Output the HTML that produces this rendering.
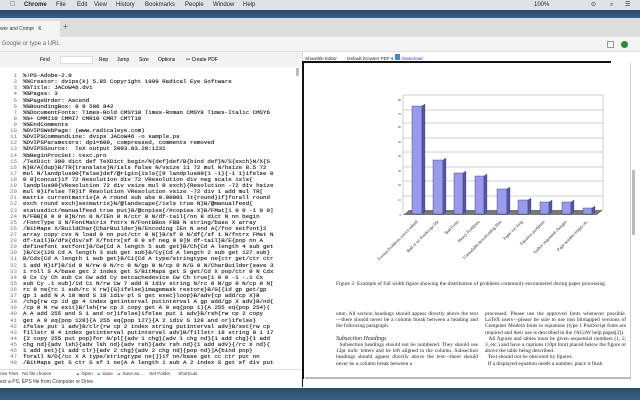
<!DOCTYPE html><html><head><meta charset="utf-8"><style>
*{margin:0;padding:0;box-sizing:border-box}
body{width:640px;height:400px;overflow:hidden;background:#fff;font-family:"Liberation Sans",sans-serif;position:relative}
.a{position:absolute}
.menu{top:0;left:0;width:640px;height:10px;background:#dfe3e8;font-size:6px;line-height:10px;color:#222}
.menu span{position:absolute;top:0}
.blue{left:0;width:640px;background:linear-gradient(#2c4a6b,#3a5f86)}
.code{left:0;top:67px;width:296px;font-family:"Liberation Mono",monospace;font-size:5.8px;line-height:6.12px;color:#111;white-space:pre;-webkit-text-stroke:0.12px #111}
.code div{height:6.12px}
.code b{display:inline-block;width:17px;text-align:right;color:#777;font-weight:normal;margin-right:6px;-webkit-text-stroke:0}
.ptxt{font-family:"Liberation Serif",serif;font-size:5.4px;line-height:6.2px;color:#222;text-align:justify}
</style></head><body>
<div class="a menu"><span style="left:10px;font-size:7px">&#63743;</span><span style="left:24px;font-weight:bold">Chrome</span><span style="left:56px">File</span><span style="left:77px">Edit</span><span style="left:94px">View</span><span style="left:116px">History</span><span style="left:145px">Bookmarks</span><span style="left:185px">People</span><span style="left:213px">Window</span><span style="left:243px">Help</span><span style="left:534px">100%</span><span style="left:591px">⊙</span><span style="left:610px">⌕</span><span style="left:625px">☰</span></div>
<div class="a blue" style="top:10px;height:8px"></div>
<div class="a" style="top:18px;left:0;width:640px;height:19px;background:#dedede"></div>
<div class="a" style="top:21px;left:0;width:60px;height:16px;background:#f4f4f4;font-size:5px;line-height:16px;color:#333">wer and Compr &nbsp;&nbsp;K</div>
<div class="a" style="top:22px;left:63px;font-size:8px;color:#555">+</div>
<div class="a" style="top:37px;left:0;width:640px;height:15px;background:#f4f4f4;border-bottom:1px solid #ddd;font-size:6px;line-height:15px;color:#666">&nbsp;Google or type a URL</div>
<div class="a" style="top:41px;left:607px;width:7px;height:7px;border:1px solid #999"></div>
<div class="a" style="top:41px;left:621px;width:7px;height:7px;border-radius:50%;background:#2a8a2a"></div>
<div class="a" style="top:52px;left:0;width:302px;height:15px;background:#f2f2f2"></div>
<div class="a" style="top:57px;left:40px;font-size:5px">Find</div>
<div class="a" style="top:56px;left:60px;width:33px;height:8px;background:#fff;border:1px solid #ddd"></div>
<div class="a" style="top:57px;left:99px;font-size:5px">Rep</div>
<div class="a" style="top:57px;left:117px;font-size:5px">Jump</div>
<div class="a" style="top:57px;left:139px;font-size:5px">Size</div>
<div class="a" style="top:57px;left:158px;font-size:5px">Options</div>
<div class="a" style="top:57px;left:186px;font-size:5px">✂ Create PDF</div>
<div class="a" style="top:68px;left:296px;width:3px;height:8px;background:#bbb"></div>
<div class="a code">
<div><b>1</b>%!PS-Adobe-2.0</div><div><b>2</b>%%Creator: dvips(k) 5.85 Copyright 1999 Radical Eye Software</div><div><b>3</b>%%Title: JACoW46.dvi</div><div><b>4</b>%%Pages: 3</div><div><b>5</b>%%PageOrder: Ascend</div><div><b>6</b>%%BoundingBox: 0 0 596 842</div><div><b>7</b>%%DocumentFonts: Times-Bold CMSY10 Times-Roman CMSY8 Times-Italic CMSY6</div><div><b>8</b>%%+ CMMI10 CMMI7 CMR10 CMR7 CMTT10</div><div><b>9</b>%%EndComments</div><div><b>10</b>%DVIPSWebPage: (www.radicaleye.com)</div><div><b>11</b>%DVIPSCommandLine: dvips JACoW46 -o sample.ps</div><div><b>12</b>%DVIPSParameters: dpi=600, compressed, comments removed</div><div><b>13</b>%DVIPSSource:  TeX output 2003.03.20:1231</div><div><b>14</b>%%BeginProcSet: texc.pro</div><div><b>15</b>/TeXDict 300 dict def TeXDict begin/N{def}def/B{bind def}N/S{exch}N/X{S</div><div><b>16</b>N}B/A{dup}B/TR{translate}N/isls false N/vsize 11 72 mul N/hsize 8.5 72</div><div><b>17</b>mul N/landplus90{false}def/@rigin{isls{[0 landplus90{1 -1}{-1 1}ifelse 0</div><div><b>18</b>0 0]concat}if 72 Resolution div 72 VResolution div neg scale isls{</div><div><b>19</b>landplus90{VResolution 72 div vsize mul 0 exch}{Resolution -72 div hsize</div><div><b>20</b>mul 0}ifelse TR}if Resolution VResolution vsize -72 div 1 add mul TR[</div><div><b>21</b>matrix currentmatrix{A A round sub abs 0.00001 lt{round}if}forall round</div><div><b>22</b>exch round exch]setmatrix}N/@landscape{/isls true N}B/@manualfeed{</div><div><b>23</b>statusdict/manualfeed true put}B/@copies{/#copies X}B/FMat[1 0 0 -1 0 0]</div><div><b>24</b>N/FBB[0 0 0 0]N/nn 0 N/IEn 0 N/ctr 0 N/df-tail{/nn 8 dict N nn begin</div><div><b>25</b>/FontType 3 N/FontMatrix fntrx N/FontBBox FBB N string/base X array</div><div><b>26</b>/BitMaps X/BuildChar{CharBuilder}N/Encoding IEn N end A{/foo setfont}2</div><div><b>27</b>array copy cvx N load 0 nn put/ctr 0 N[}B/sf 0 N/df{/sf 1 N/fntrx FMat N</div><div><b>28</b>df-tail}B/dfs{div/sf X/fntrx[sf 0 0 sf neg 0 0]N df-tail}B/E{pop nn A</div><div><b>29</b>definefont setfont}B/Cw{Cd A length 5 sub get}B/Ch{Cd A length 4 sub get</div><div><b>30</b>}B/Cx{128 Cd A length 3 sub get sub}B/Cy{Cd A length 2 sub get 127 sub}</div><div><b>31</b>B/Cdx{Cd A length 1 sub get}B/Ci{Cd A type/stringtype ne{ctr get/ctr ctr</div><div><b>32</b>1 add N}if}B/id 0 N/rw 0 N/rc 0 N/gp 0 N/cp 0 N/G 0 N/CharBuilder{save 3</div><div><b>33</b>1 roll S A/base get 2 index get S/BitMaps get S get/Cd X pop/ctr 0 N Cdx</div><div><b>34</b>0 Cx Cy Ch sub Cx Cw add Cy setcachedevice Cw Ch true[1 0 0 -1 -.1 Cx</div><div><b>35</b>sub Cy .1 sub]/id Ci N/rw Cw 7 add 8 idiv string N/rc 0 N/gp 0 N/cp 0 N[</div><div><b>36</b>rc 0 ne{rc 1 sub/rc X rw}{G}ifelse}imagemask restore}B/G{{id gp get/gp</div><div><b>37</b>gp 1 add N A 18 mod S 18 idiv pl S get exec}loop}B/adv{cp add/cp X}B</div><div><b>38</b>/chg{rw cp id gp 4 index getinterval putinterval A gp add/gp X adv}B/nd{</div><div><b>39</b>/cp 0 N rw exit}B/lsh{rw cp 2 copy get A 0 eq{pop 1}{A 255 eq{pop 254}{</div><div><b>40</b>A A add 255 and S 1 and or}ifelse}ifelse put 1 adv}B/rsh{rw cp 2 copy</div><div><b>41</b>get A 0 eq{pop 128}{A 255 eq{pop 127}{A 2 idiv S 128 and or}ifelse}</div><div><b>42</b>ifelse put 1 adv}B/clr{rw cp 2 index string putinterval adv}B/set{rw cp</div><div><b>43</b>fillstr 0 4 index getinterval putinterval adv}B/fillstr 18 string 0 1 17</div><div><b>44</b>{2 copy 255 put pop}for N/pl[{adv 1 chg}{adv 1 chg nd}{1 add chg}{1 add</div><div><b>45</b>chg nd}{adv lsh}{adv lsh nd}{adv rsh}{adv rsh nd}{1 add adv}{/rc X nd}{</div><div><b>46</b>1 add set}{1 add clr}{adv 2 chg}{adv 2 chg nd}{pop nd}]A{bind pop}</div><div><b>47</b>forall N/D{/cc X A type/stringtype ne{]}if nn/base get cc ctr put nn</div><div><b>48</b>/BitMaps get S ctr S sf 1 ne{A A length 1 sub A 2 index S get sf div put</div>
</div>
<div class="a" style="top:369px;left:0;width:302px;height:8px;font-size:4.6px;line-height:8px;color:#333;border-top:1px solid #ddd;white-space:nowrap">ose Files &nbsp; No file chosen &nbsp;&nbsp;&nbsp;&nbsp;&nbsp;&nbsp;&nbsp;&nbsp;&nbsp;&nbsp;&nbsp;&nbsp;&nbsp;&nbsp;&nbsp;&nbsp;&nbsp;&nbsp;<span style="color:#2a7">▲</span> Open &nbsp;&nbsp;<span style="color:#2a7">▲</span> Save &nbsp;&nbsp;<span style="color:#2a7">▲</span> Save as... &nbsp;&nbsp;&nbsp; Set Folder &nbsp;&nbsp;&nbsp;&nbsp; Shortcuts</div>
<div class="a" style="top:379px;left:0;font-size:5px;color:#333">ect a PS, EPS file from Computer or Drive.</div>
<div class="a" style="top:52px;left:302px;width:338px;height:336px;background:#fff;border-left:1px solid #ddd"></div>
<div class="a" style="top:54px;left:305px;font-size:4.6px;color:#222;white-space:nowrap">Showtitle Editor &nbsp;&nbsp;&nbsp;&nbsp;&nbsp;&nbsp; Default browser PDF ▾ <span style="display:inline-block;width:5px;height:6px;background:#48c"></span> &nbsp;<span style="color:#33c;text-decoration:underline">Download</span></div>
<div class="a" style="top:61px;left:303px;width:308px;height:2px;background:#111"></div>
<div class="a" style="top:61px;left:302px;width:2px;height:326px;background:#111"></div>
<div class="a" style="top:63px;left:630px;width:1px;height:322px;background:#ccc"></div>
<div class="a" style="top:170px;left:632px;width:3px;height:65px;background:#bbb"></div>
<svg class="a" style="top:60px;left:290px" width="350" height="230" viewBox="290 60 350 230">
<g stroke="#888" stroke-width=".4" fill="none">
<polyline points="403,215 403,95 603,95 603,210"/>
<line x1="403" y1="110" x2="603" y2="110"/><line x1="403" y1="123" x2="603" y2="123"/><line x1="403" y1="138" x2="603" y2="138"/><line x1="403" y1="152" x2="603" y2="152"/><line x1="403" y1="167" x2="603" y2="167"/><line x1="403" y1="181" x2="603" y2="181"/><line x1="403" y1="196" x2="603" y2="196"/>
</g>
<polygon points="403,215 409,210 603,210 597,215" fill="#777"/>
<g font-family="Liberation Serif" font-size="3" fill="#333" text-anchor="end">
<text x="401" y="101">80</text><text x="401" y="115">70</text><text x="401" y="128">60</text><text x="401" y="143">50</text><text x="401" y="157">40</text><text x="401" y="172">30</text><text x="401" y="186">20</text><text x="401" y="201">10</text><text x="401" y="216">0</text></g>
<g fill="#9999ee" stroke="#335" stroke-width=".4">
<rect x="412" y="106" width="10" height="108"/><rect x="433" y="160" width="10" height="54"/><rect x="454" y="173" width="9" height="41"/><rect x="475" y="176" width="9" height="38"/><rect x="497" y="189" width="10" height="25"/><rect x="518" y="200" width="10" height="14"/><rect x="540" y="202" width="9" height="12"/><rect x="562" y="202" width="9" height="12"/><rect x="583" y="208" width="9" height="6"/></g>
<g fill="#5555aa" stroke="#335" stroke-width=".3">
<polygon points="422,106 425,104 425,212 422,214"/><polygon points="443,160 446,158 446,212 443,214"/><polygon points="463,173 466,171 466,212 463,214"/><polygon points="484,176 487,174 487,212 484,214"/><polygon points="507,189 510,187 510,212 507,214"/><polygon points="528,200 531,198 531,212 528,214"/><polygon points="549,202 552,200 552,212 549,214"/><polygon points="571,202 574,200 574,212 571,214"/><polygon points="592,208 595,206 595,212 592,214"/></g>
<g font-family="Liberation Serif" font-size="4.4" fill="#222" text-anchor="end">
<text transform="translate(418,222) rotate(-45)">Format Problems source edited</text>
<text transform="translate(439,222) rotate(-45)">Bad or no PostScript file</text>
<text transform="translate(459,222) rotate(-45)">Bad Fonts</text>
<text transform="translate(480,222) rotate(-45)">Heavy Problems</text>
<text transform="translate(502,222) rotate(-45)">Unreadable downloading files</text>
<text transform="translate(523,222) rotate(-45)">Paper too long</text>
<text transform="translate(545,222) rotate(-45)">Equation problems</text>
<text transform="translate(567,222) rotate(-45)">Author requested changes</text>
<text transform="translate(588,222) rotate(-45)">Page number/empty etc</text>
</g></svg>
<div class="a ptxt" style="top:281px;left:336px;width:290px">Figure 2: Example of full width figure showing the distribution of problems commonly encountered during paper processing.</div>
<div class="a ptxt" style="top:311px;left:336px;width:142px">umn. All section headings should appear directly above the text—there should never be a column break between a heading and the following paragraph.<br><br><i style="font-size:6px">Subsection Headings</i><br>&nbsp;&nbsp;Subsection headings should not be numbered. They should use 12pt <i>italic</i> letters and be left aligned in the column. Subsection headings should appear directly above the text—there should never be a column break between a</div>
<div class="a ptxt" style="top:311px;left:485px;width:141px">processed. Please use the approved fonts whenever possible. LaTeX users—please be sure to use non bitmapped versions of Computer Modern fonts in equations (type 1 PostScript fonts are required and their use is described in the JACoW help pages[2]).<br>&nbsp;&nbsp;All figures and tables must be given sequential numbers (1, 2, 3, etc.) and have a captions (10pt font) placed below the figure or above the table being described.<br>&nbsp;&nbsp;Text should not be obscured by figures.<br>&nbsp;&nbsp;If a displayed equation needs a number, place it flush</div>
<div class="a" style="top:379px;left:303px;width:330px;height:9px;background:#fff"></div>
<div class="a" style="top:377px;left:305px;width:326px;height:2px;background:#bbb"></div>
<div class="a blue" style="top:388px;height:12px"></div>
</body></html>
